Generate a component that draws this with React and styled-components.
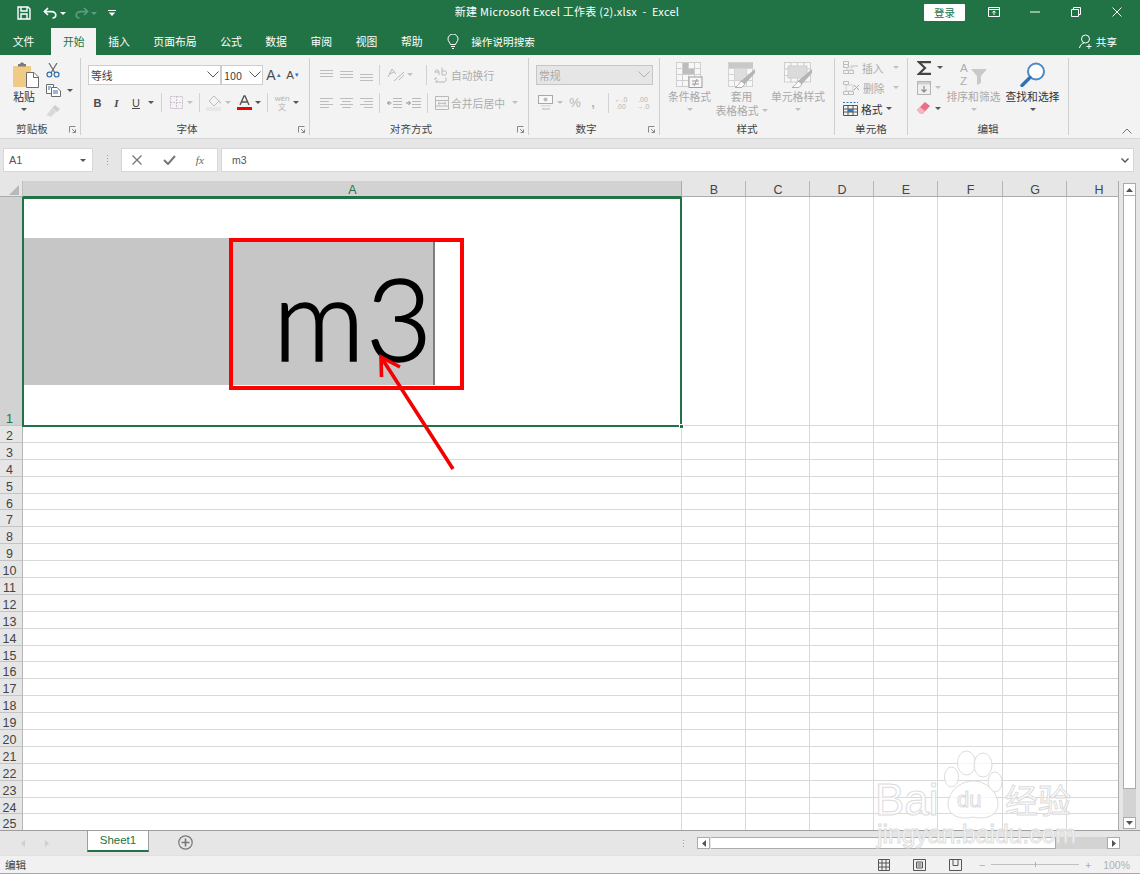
import React from 'react';
import styled, { createGlobalStyle } from 'styled-components';

const CJK = '"Noto Sans CJK SC", "Liberation Sans", sans-serif';
const GREEN = '#217346';
const DIM = '#b4b4b4';
const DARK = '#4a4a4a';

const Global = createGlobalStyle`
  html, body { margin: 0; padding: 0; background: #fff; }
  * { box-sizing: border-box; }
  body { font-family: ${CJK}; }
`;

const Page = styled.div`
  position: relative; width: 1140px; height: 875px; overflow: hidden;
  display: flex; flex-direction: column; background: #fff; font-size: 11px; color: #444;
`;

/* ---------- title bar ---------- */
const TitleBar = styled.header`
  height: 28px; background: ${GREEN}; color: #fff;
  display: grid; grid-template-columns: 1fr auto 1fr; align-items: start;
`;
const Qat = styled.div`display: flex; align-items: center; padding-left: 17px; height: 26px;`;
const QatSlot = styled.span`
  display: inline-flex; align-items: center; justify-content: center;
  width: ${p => p.$w}px; height: 20px;
`;
const DocTitle = styled.div`font-size: 11px; line-height: 22px; white-space: pre; color: #fff; padding-right: 6px; letter-spacing: .25px;`;
const WindowControls = styled.div`display: flex; align-items: center; justify-content: flex-end; padding-right: 3px; height: 24px;`;
const LoginButton = styled.button`
  width: 41px; height: 17px; padding: 0; border: 0; border-radius: 1px; margin-right: 8px;
  background: #fff; color: ${GREEN}; font: 10.5px ${CJK};
`;
const WinSlot = styled.span`
  width: 41px; display: inline-flex; justify-content: center; align-items: center; height: 20px;
`;

/* ---------- tabs ---------- */
const TabStrip = styled.nav`
  height: 27px; background: ${GREEN}; display: flex; align-items: stretch; padding-left: 1px; position: relative;
`;
const Tab = styled.span`
  padding: 0 11.8px 1px; margin-left: ${p => p.$gap || 0}px; display: flex; align-items: center;
  font-size: 10.8px; white-space: nowrap;
  background: ${p => (p.$active ? '#f3f3f3' : 'transparent')};
  color: ${p => (p.$active ? GREEN : '#fff')};
`;
const TellMe = styled.span`
  display: flex; align-items: center; gap: 12px; margin-left: 13px; color: #fff; font-size: 10.6px; padding-bottom: 1px;
`;
const Share = styled.span`
  margin-left: auto; margin-right: 23px; display: flex; align-items: center; gap: 3px; color: #fff; font-size: 10.6px;
`;

/* ---------- ribbon ---------- */
const Ribbon = styled.section`
  height: 83px; background: #f3f3f3; display: flex; padding-top: 3px; position: relative;
`;
const Group = styled.div`
  width: ${p => p.$w}px; height: 77px; display: flex; flex-direction: column;
  border-right: 1px solid #cfcfcf;
`;
const GroupBody = styled.div`flex: 1; display: flex; min-height: 0;`;
const GroupFoot = styled.div`height: 13px; display: flex; align-items: center;`;
const GroupName = styled.span`flex: 1; text-align: center; font-size: 10.6px; color: #444; line-height: 13px; white-space: nowrap;`;
const Launcher = styled.span`width: 16px; display: flex; justify-content: center; padding-top: 2px;`;
const Rows = styled.div`
  display: flex; flex-direction: column; gap: 9px; padding: 7px 0 0 ${p => p.$left || 0}px;
`;
const Row = styled.div`display: flex; align-items: center; height: 19px;`;
const Slot = styled.span`
  width: ${p => p.$w}px; height: 19px; flex: none; display: inline-flex; align-items: center; justify-content: center;
  color: ${p => (p.$dim ? DIM : DARK)}; font-size: ${p => p.$size || 11}px;
  font-weight: ${p => (p.$bold ? 700 : 400)}; font-style: ${p => (p.$italic ? 'italic' : 'normal')};
  text-decoration: ${p => (p.$under ? 'underline' : 'none')};
  font-family: ${p => (p.$serif ? '"Liberation Serif", serif' : '"Liberation Sans", sans-serif')};
`;
const StackedSlot = styled(Slot)`flex-direction: column; line-height: ${p => p.$lh || 8}px; text-align: center;`;
const Sep = styled.span`
  width: 1px; height: ${p => p.$h || 19}px; background: #d2d2d2; flex: none;
  margin: 0 ${p => p.$r ?? 5}px 0 ${p => p.$l ?? 5}px;
`;
const Caret = styled.i`
  display: inline-block; width: 0; height: 0; flex: none;
  border-left: 3px solid transparent; border-right: 3px solid transparent;
  border-top: 3px solid ${p => p.$c || (p.$dim ? '#c0c0c0' : '#555')};
  margin-left: ${p => p.$ml || 0}px;
`;
const Big = styled.div`
  width: ${p => p.$w}px; flex: none; display: flex; flex-direction: column; align-items: center;
  padding-top: 4px; margin-left: ${p => p.$ml || 0}px;
  color: ${p => (p.$dim ? '#a9a9a9' : '#333')}; font-size: 10.8px; line-height: 14px;
`;
const BigIcon = styled.div`
  height: 27px; display: flex; align-items: flex-start; justify-content: center;
  padding-left: ${p => p.$shift || 0}px;
`;
const BigLine = styled.span`white-space: nowrap; display: inline-flex; align-items: center; gap: 3px;`;
const BigCaret = styled.span`height: 12px; display: flex; align-items: center;`;
const SmallColumn = styled.div`
  display: flex; flex-direction: column; width: ${p => p.$w}px; flex: none; padding-left: ${p => p.$left}px; padding-top: ${p => p.$top}px;
`;
const SmallRow = styled.div`
  height: ${p => p.$h}px; display: flex; align-items: center; gap: ${p => p.$gap ?? 3}px; font-size: 10.8px;
  color: ${p => (p.$dim ? '#adadad' : '#333')};
`;
const FontBox = styled.div`
  width: ${p => p.$w}px; height: 20px; margin-right: ${p => p.$mr || 0}px; flex: none;
  background: #fff; border: 1px solid #cdcdcd; display: flex; align-items: center; justify-content: space-between;
  padding: 0 1px 0 2px; font-size: 10.8px; color: #444;
`;
const NumberBox = styled(FontBox)`
  background: #e6e6e6; border-color: #c6c6c6; color: #a9a9a9; padding: 0 2px 0 2px;
`;
const DimText = styled.span`color: #adadad; font-size: 10.8px; white-space: nowrap; margin-left: ${p => p.$ml}px;`;
const CollapseBtn = styled.span`position: absolute; right: 8px; bottom: 4px; display: flex;`;
const SizeUp = styled.sup`font-size: 6px; color: #2f76c0;`;
const WenChar = styled.span`font-family: ${CJK};`;

/* ---------- formula bar ---------- */
const FormulaBar = styled.div`
  height: 43px; background: #e6e6e6; border-top: 1px solid #d6d6d6;
  padding: 9px 6px 9px 3px; display: flex; align-items: stretch;
`;
const NameBox = styled.div`
  width: 90px; background: #fff; border: 1px solid #d6d6d6; display: flex; align-items: center;
  justify-content: space-between; padding: 0 6px 0 5px; font: 11px "Liberation Sans", sans-serif; color: #555;
`;
const Grip = styled.span`
  width: ${p => p.$w}px; display: flex; flex-direction: column; align-items: center; justify-content: center; gap: 2px; flex: none;
  & > b { width: 1px; height: 1px; background: #a0a0a0; display: block; }
`;
const SheetGrip = styled(Grip)`height: 12px; margin: 6px 7px 0 0;`;
const FnBox = styled.div`
  width: 97px; background: #fff; border: 1px solid #d6d6d6; display: flex; align-items: center; justify-content: space-around;
  padding-right: 3px; margin-right: 3px; color: #777;
`;
const FxMark = styled.span`font: italic 11px "Liberation Serif", serif; color: #666;`;
const FormulaInput = styled.div`
  flex: 1; background: #fff; border: 1px solid #d6d6d6; display: flex; align-items: center; justify-content: space-between;
  padding: 0 4px 0 10px; font: 10.5px "Liberation Sans", sans-serif; color: #555;
`;

/* ---------- sheet ---------- */
const SheetArea = styled.div`height: 649px; display: flex; background: #e6e6e6;`;
const SheetMain = styled.div`width: 1119px; flex: none; display: flex; flex-direction: column; overflow: hidden; border-right: 1px solid #ababab;`;
const ColHeaderRow = styled.div`height: 16px; display: flex; flex: none; border-bottom: 1px solid #ababab;`;
const Corner = styled.div`
  width: 23px; flex: none; background: #e6e6e6; border-right: 1px solid #c0c0c0; display: flex; align-items: flex-end; justify-content: flex-end; padding: 0 3px 1px 0;
`;
const ColHeader = styled.div`
  width: ${p => p.$w}px; flex: none; text-align: center; padding-left: 1px; font: 12.5px/19px "Liberation Sans", sans-serif;
  background: ${p => (p.$sel ? '#d2d2d2' : '#e6e6e6')}; color: ${p => (p.$sel ? GREEN : '#444')};
  border-right: 1px solid ${p => (p.$sel ? '#ababab' : '#b6b6b6')};
  border-bottom: ${p => (p.$sel ? `2px solid ${GREEN}` : '0')};
  height: ${p => (p.$sel ? 17 : 15)}px; overflow: hidden;
`;
const RowLine = styled.div`display: flex; flex: none; height: ${p => p.$h}px;`;
const RowHeader = styled.div`
  width: 23px; flex: none; padding: ${p => (p.$sel ? 0 : 4)}px 3px 0 0; text-align: center;
  display: flex; align-items: ${p => (p.$sel ? 'flex-end' : 'center')}; justify-content: center;
  font: 12.5px/${p => (p.$sel ? 11 : 14)}px "Liberation Sans", sans-serif; overflow: hidden;
  background: ${p => (p.$sel ? '#d2d2d2' : '#e6e6e6')}; color: ${p => (p.$sel ? GREEN : '#444')};
  border-right: 1px solid ${p => (p.$sel ? GREEN : '#b6b6b6')};
  border-bottom: 1px solid #c4c4c4;
`;
const Cell = styled.div`
  width: ${p => p.$w}px; flex: none; background: #fff;
  border-right: 1px solid #d9d9d9; border-bottom: 1px solid #d9d9d9;
`;
const SelectedCell = styled.div`
  width: 660px; flex: none; height: 230px; margin-left: -1px; background: #fff; padding-top: 39px; position: relative;
  border: 2px solid ${GREEN}; z-index: 1;
`;
const Handle = styled.i`
  position: absolute; right: -4px; bottom: -4px; width: 5px; height: 5px; background: ${GREEN}; border: 1px solid #fff;
`;
const Pasted = styled.div`
  width: 411px; height: 147px; background: #c6c6c6; border-right: 2px solid #7d7d7d;
  display: flex; align-items: center; justify-content: flex-end;
  font: 300 114px/147px Lato, "Liberation Sans", sans-serif; color: #000; overflow: hidden;
  -webkit-text-stroke: 1.6px #000;
`;
const PastedText = styled.span`display: block; margin-top: 9px; white-space: nowrap; letter-spacing: 1px;`;
const VScroll = styled.aside`flex: 1; padding: 2px 4px 1px 4px; display: flex; flex-direction: column;`;
const ScrollBtn = styled.span`
  flex: none; width: ${p => p.$w || 13}px; height: ${p => p.$h || 13}px; background: #fff; border: 1px solid #ababab;
  display: flex; align-items: center; justify-content: center;
`;
const VTrack = styled.div`flex: 1; background: #d3d3d3; display: flex; flex-direction: column;`;
const VThumb = styled.div`height: 593px; background: #fff; border: 1px solid #ababab; border-top: 0;`;

/* ---------- sheet tabs ---------- */
const SheetTabs = styled.div`
  height: 25px; background: #e6e6e6; border-top: 1px solid #9e9e9e; display: flex; align-items: flex-start;
`;
const TabNav = styled.div`width: 87px; height: 24px; flex: none; display: flex; align-items: center; padding-left: 21px; gap: 20px;`;
const SheetTab = styled.div`
  width: 62px; height: 21px; background: #fff; color: ${GREEN}; text-align: center; flex: none;
  border: 1px solid #9e9e9e; border-top: 0; border-bottom: 2px solid ${GREEN};
  font: 11.5px/18px "Liberation Sans", sans-serif;
`;
const AddSheet = styled.span`margin-left: 29px; margin-top: 4px; display: flex;`;
const Spacer = styled.span`flex: 1;`;
const HScroll = styled.div`width: 423px; height: 12px; margin: 6px 20px 0 0; display: flex; flex: none;`;
const HThumb = styled.div`width: 345px; background: #fff; border: 1px solid #ababab; border-left: 0; margin-left: 1px;`;
const HTrack = styled.div`flex: 1; background: #d3d3d3;`;

/* ---------- status bar ---------- */
const StatusBar = styled.footer`
  height: 19px; background: #f1f1f1; border-top: 1px solid #e0e0e0; border-bottom: 1px solid #a8a8a8;
  display: flex; align-items: center; padding: 0 10px 0 5px; font-size: 10.6px; color: #444;
`;
const Views = styled.div`margin-left: auto; display: flex; align-items: center; gap: 23px; margin-right: 17px;`;
const ZoomBar = styled.div`display: flex; align-items: center; gap: 5px; color: #aaa;`;
const ZoomTrack = styled.span`
  width: 88px; height: 1px; background: #c0c0c0; position: relative; margin: 0 1px;
  &::after { content: ''; position: absolute; left: 44px; top: -2px; width: 1px; height: 5px; background: #b0b0b0; }
`;
const ZoomValue = styled.span`font: 10.5px "Liberation Sans", sans-serif; color: #b0b0b0; margin-left: 7px;`;

/* ---------- overlays ---------- */
const Callout = styled.div`
  position: absolute; z-index: 2; left: 229px; top: 238px; width: 235px; height: 152px; border: 4px solid #ff0000; pointer-events: none;
`;
const OverlaySvg = styled.svg`position: absolute; z-index: 3; left: 0; top: 0; pointer-events: none;`;

/* ---------- icons ---------- */
const Ico = ({ w, h, children, fill = 'none', stroke = 'currentColor', sw = 1 }) => (
  <svg width={w} height={h} viewBox={`0 0 ${w} ${h}`} fill={fill} stroke={stroke} strokeWidth={sw}>{children}</svg>
);
const Chevron = ({ c = '#555', w = 12 }) => (
  <Ico w={w} h={7} stroke={c}><path d={`M0.5 0.5 L${w / 2} 6 L${w - 0.5} 0.5`} /></Ico>
);
const Launch = () => (
  <Ico w={7} h={7} stroke="#888"><path d="M.5 6.5V.5H6.5" /><path d="M3 3l3.5 3.5M6.5 3.5v3h-3" /></Ico>
);
const Lines = ({ w = 14, h = 12, segs, c = '#bdbdbd' }) => (
  <Ico w={w} h={h} stroke={c}>{segs.map((s, i) => <path key={i} d={`M${s[0]} ${s[2] + .5}H${s[1]}`} />)}</Ico>
);
const SaveIcon = () => (
  <Ico w={14} h={14} stroke="#fff" sw={1.4}>
    <path d="M1 1H11L13 3V13H1Z" /><path d="M4 1V5H10V1" /><path d="M4 13V8H10V13" />
  </Ico>
);
const UndoIcon = () => (
  <Ico w={14} h={12} stroke="#fff" sw={1.6}>
    <path d="M5 1L1.4 4.6L5 8" /><path d="M1.5 4.6H8.5C11 4.6 12.8 6.2 12.8 8C12.8 9.8 11.5 11 9.5 11" />
  </Ico>
);
const RedoIcon = () => (
  <Ico w={14} h={12} stroke="#5f9c7f" sw={1.6}>
    <path d="M9 1L12.6 4.6L9 8" /><path d="M12.5 4.6H5.5C3 4.6 1.2 6.2 1.2 8C1.2 9.8 2.5 11 4.5 11" />
  </Ico>
);
const QatMenu = () => (
  <Ico w={8} h={7} stroke="#fff"><path d="M0 .5H8" /><path d="M.8 2.5H7.2L4 6Z" fill="#fff" stroke="none" /></Ico>
);
const PasteIcon = () => (
  <svg width="26" height="27" viewBox="0 0 26 27">
    <rect x="0" y="4" width="18" height="21" rx="1" fill="#f0cb85" />
    <path d="M5 4.5H13V2H11C11 0 7 0 7 2H5Z" fill="#7b7b7b" />
    <path d="M13.5 10.5H21L25.5 15V25.5H13.5Z" fill="#fff" stroke="#6d6d6d" />
    <path d="M20.5 10.5V15.5H25.5" fill="none" stroke="#6d6d6d" />
  </svg>
);
const CutIcon = () => (
  <svg width="14" height="15" viewBox="0 0 14 15" fill="none">
    <path d="M3 0L9 10M11 0L5 10" stroke="#707070" strokeWidth="1.3" />
    <circle cx="3.4" cy="11.6" r="2.4" stroke="#2f6fb0" strokeWidth="1.2" />
    <circle cx="10.6" cy="11.6" r="2.4" stroke="#2f6fb0" strokeWidth="1.2" />
  </svg>
);
const CopyIcon = () => (
  <svg width="15" height="13" viewBox="0 0 15 13" fill="#fff" stroke="#6b6b6b">
    <path d="M.5.5H7.5V9.5H.5Z" /><path d="M5.5 3.5H11L14.5 7V12.5H5.5Z" />
    <path d="M2 3H5M2 5H4M7 7H12M7 9H12" stroke="#2f6fb0" fill="none" />
  </svg>
);
const BrushIcon = () => (
  <svg width="15" height="14" viewBox="0 0 15 14">
    <path d="M9 1L14 5L11 8L6 4Z" fill="#cfcfcf" />
    <path d="M6 4L10 8L5 13L0.5 11Z" fill="#d9d9d9" />
  </svg>
);
const BorderIcon = () => (
  <Ico w={13} h={13} stroke="#cdbccd"><path d="M.5.5h12v12H.5z" strokeDasharray="2 1" /><path d="M6.5 0v13M0 6.5h13" strokeDasharray="2 1" /></Ico>
);
const FillIcon = () => (
  <svg width="17" height="16" viewBox="0 0 17 16">
    <path d="M3 6L8 1L13 6L8 11Z" fill="none" stroke="#bdbdbd" />
    <path d="M13.5 5C15 7 15.5 8 14.5 9C13.5 8.5 13 7 13.5 5Z" fill="#c8c8c8" />
    <rect x="0" y="12" width="15" height="4" fill="#e8e8e8" />
  </svg>
);
const FontColor = () => (
  <svg width="15" height="15" viewBox="0 0 15 15">
    <path d="M3 10L7 1H8L12 10M4.6 7H10.4" fill="none" stroke="#555" strokeWidth="1.4" />
    <rect x="0" y="12" width="15" height="3" fill="#f00000" />
  </svg>
);
const WrapIcon = () => (
  <Ico w={14} h={16} stroke="#b8b8b8">
    <path d="M1 5.5C1 2 5 2 5 5.5V8M1 5H5M8 .5V8M8 4H11C13 4 13 8 11 8H8" />
    <path d="M12 10.5V13C12 14.5 11 15 9 15H2M4 12.5L1.5 15L4 17M3 11H1V13" />
  </Ico>
);
const MergeIcon = () => (
  <Ico w={14} h={14} stroke="#b8b8b8"><path d="M.5.5h13v13H.5zM.5 4.5h13M.5 10h13" /><path d="M3 7.3H11M3 7.3l1.5-1.3M3 7.3l1.5 1.3M11 7.3L9.5 6M11 7.3l-1.5 1.3" /></Ico>
);
const OrientIcon = () => (
  <Ico w={18} h={14} stroke="#b8b8b8">
    <path d="M1 9L5 1L9 6M2.5 6L7 4" /><path d="M7 13L17 4M12 12L17 7" />
  </Ico>
);
const IndentIcon = ({ flip }) => (
  <Ico w={15} h={12} stroke="#b8b8b8">
    <path d="M6 1.5H15M6 4.5H15M6 7.5H15M6 10.5H15" />
    <path d={flip ? 'M0 6H4M2.5 4L4.5 6L2.5 8' : 'M.5 6H4.5M2.5 4L.5 6L2.5 8'} stroke="#8a8a8a" />
  </Ico>
);
const AccountingIcon = () => (
  <svg width="15" height="15" viewBox="0 0 15 15">
    <rect x=".5" y=".5" width="14" height="8" fill="#f8f8f8" stroke="#a8a8a8" />
    <circle cx="7.5" cy="4.5" r="2" fill="#bcbcbc" />
    <rect x="3" y="10" width="10" height="1.5" fill="#ddd" /><rect x="4" y="13" width="8" height="2" fill="#d4d4d4" />
  </svg>
);
const GridBase = ({ x = 0, y = 0, cols = 4, rows = 4, s = 6, c = '#cfcfcf' }) => (
  <g stroke={c} fill="#f7f7f7">
    {Array.from({ length: cols * rows }).map((_, i) => (
      <rect key={i} x={x + .5 + (i % cols) * s} y={y + .5 + Math.floor(i / cols) * s} width={s} height={s} />
    ))}
  </g>
);
const CondIcon = () => (
  <svg width="27" height="26" viewBox="0 0 27 26">
    <GridBase cols={4} rows={4} s={6} />
    <rect x="7" y="7" width="11" height="5" fill="#bdbdbd" /><rect x="7" y="1" width="5" height="6" fill="#bdbdbd" />
    <rect x="13" y="15" width="13" height="10.5" fill="#f7f7f7" stroke="#9e9e9e" />
    <path d="M16 19H23M16 22H23M21 17L18 24" stroke="#9a9a9a" fill="none" />
  </svg>
);
const TableStyleIcon = () => (
  <svg width="28" height="26" viewBox="0 0 28 26">
    <GridBase cols={4} rows={4} s={6} c="#d3d3d3" />
    <rect x="1" y="1" width="24" height="5" fill="#c9c9c9" />
    <rect x="7" y="7" width="11" height="11" fill="#dedede" />
    <path d="M27 7V11L17 22L13 19Z" fill="#b5b5b5" />
    <path d="M13 19L17 22L14 25.5H7C10 24 11 22 13 19Z" fill="#fff" stroke="#b0b0b0" />
  </svg>
);
const CellStyleIcon = () => (
  <svg width="29" height="26" viewBox="0 0 29 26">
    <GridBase cols={4} rows={3} s={6.5} c="#cfcfcf" />
    <rect x="4" y="4" width="19" height="12" fill="#dbdbdb" stroke="#cfcfcf" />
    <path d="M28 7V11L18 22L14 19Z" fill="#b5b5b5" />
    <path d="M14 19L18 22L15 25.5H8C11 24 12 22 14 19Z" fill="#fff" stroke="#b0b0b0" />
  </svg>
);
const InsertIcon = () => (
  <Ico w={16} h={13} stroke="#bdbdbd"><path d="M.5.5h5v3h-5zM.5 3.5h5v3h-5zM.5 9.5h5v3h-5zM5.5 9.5h5v3h-5z" /><path d="M8 5h7" /><path d="M4 6h5v3H4z" stroke="#cfcfcf" /></Ico>
);
const DeleteIcon = () => (
  <Ico w={17} h={14} stroke="#bdbdbd"><path d="M.5.5h5v3h-5zM.5 10.5h5v3h-5zM5.5 10.5h5v3h-5z" /><path d="M3 4h7v6H3z" stroke="#cfcfcf" /><path d="M11 4l5 5M16 4l-5 5" stroke="#a8a8a8" /></Ico>
);
const FormatIcon = () => (
  <svg width="15" height="15" viewBox="0 0 15 15" fill="none">
    <path d="M0 1.5H15" stroke="#2f76c0" strokeDasharray="2 1.5" />
    <path d="M.5 4.5h14v10H.5zM.5 8h14M.5 11h14M5 4.5v10M10 4.5v10" stroke="#555" />
    <rect x="5" y="8" width="5" height="3" fill="#2f76c0" />
  </svg>
);
const SumIcon = () => (
  <Ico w={15} h={14} stroke="#444" sw={2.2}><path d="M14 1.2H2L8 7L2 12.8H14" /></Ico>
);
const FillDownIcon = () => (
  <svg width="14" height="14" viewBox="0 0 14 14" fill="none">
    <rect x=".5" y=".5" width="13" height="13" fill="#f0f0f0" stroke="#b5b5b5" />
    <rect x="1" y="1" width="12" height="2.5" fill="#cfcfcf" />
    <path d="M7 5V11M4.5 8.5L7 11L9.5 8.5" stroke="#8b8b8b" strokeWidth="1.2" />
  </svg>
);
const EraserIcon = () => (
  <svg width="13" height="12" viewBox="0 0 13 12">
    <path d="M8 0L13 4L6 11.5H3L0 8Z" fill="#ea6f83" />
    <path d="M0 8L3 5L8 9L6 11.5H3Z" fill="#f6b7c2" />
  </svg>
);
const SortIcon = () => (
  <svg width="27" height="24" viewBox="0 0 27 24">
    <text x="0" y="10" fontFamily="Liberation Sans" fontSize="11.5" fill="#adadad">A</text>
    <text x="0" y="23" fontFamily="Liberation Sans" fontSize="11.5" fill="#adadad">Z</text>
    <path d="M11 7H27L21 14V21L17 23V14Z" fill="#c9c9c9" />
  </svg>
);
const FindIcon = () => (
  <svg width="26" height="25" viewBox="0 0 26 25" fill="none">
    <circle cx="16" cy="9.5" r="8" stroke="#4d8ac4" strokeWidth="2" fill="#fff" />
    <path d="M10 15.5L2 23.5" stroke="#2f73b5" strokeWidth="3.4" strokeLinecap="round" />
  </svg>
);

/* ---------- data ---------- */
const COLS = [659, 64, 64, 64, 64, 65, 64, 64];
const NAMES = ['A', 'B', 'C', 'D', 'E', 'F', 'G', 'H'];
const ROWS = Array.from({ length: 24 }, (_, i) => i + 2);
const TABS = ['插入', '页面布局', '公式', '数据', '审阅', '视图', '帮助'];

const GroupFrame = ({ w, name, launcher, children }) => (
  <Group $w={w}>
    <GroupBody>{children}</GroupBody>
    <GroupFoot>
      <GroupName>{name}</GroupName>
      {launcher && <Launcher><Launch /></Launcher>}
    </GroupFoot>
  </Group>
);

export default function App() {
  return (
    <Page>
      <Global />
      <TitleBar>
        <Qat>
          <QatSlot $w={14}><SaveIcon /></QatSlot>
          <QatSlot $w={12} />
          <QatSlot $w={14}><UndoIcon /></QatSlot>
          <QatSlot $w={11}><Caret $c="#fff" /></QatSlot>
          <QatSlot $w={7} />
          <QatSlot $w={14}><RedoIcon /></QatSlot>
          <QatSlot $w={10}><Caret $c="#5f9c7f" /></QatSlot>
          <QatSlot $w={9} />
          <QatSlot $w={8}><QatMenu /></QatSlot>
        </Qat>
        <DocTitle>新建 Microsoft Excel 工作表 (2).xlsx  -  Excel</DocTitle>
        <WindowControls>
          <LoginButton>登录</LoginButton>
          <WinSlot>
            <Ico w={12} h={10} stroke="#fff"><path d="M.5.5h11v9H.5zM.5 2.5h11" /><path d="M6 8V4M4.3 5.6L6 3.9l1.7 1.7" /></Ico>
          </WinSlot>
          <WinSlot><Ico w={10} h={2} stroke="#fff"><path d="M0 1H10" /></Ico></WinSlot>
          <WinSlot><Ico w={10} h={10} stroke="#fff"><path d="M.5 2.5h7v7h-7zM2.5 2.5v-2h7v7h-2" /></Ico></WinSlot>
          <WinSlot><Ico w={10} h={10} stroke="#fff"><path d="M.5.5l9 9M9.5.5l-9 9" /></Ico></WinSlot>
        </WindowControls>
      </TitleBar>

      <TabStrip>
        <Tab>文件</Tab>
        <Tab $active $gap={5}>开始</Tab>
        {TABS.map(t => <Tab key={t}>{t}</Tab>)}
        <TellMe>
          <Ico w={12} h={15} stroke="#fff"><path d="M3.5 10.5C3 8.5 1 7.5 1 5A5 5 0 0 1 11 5C11 7.5 9 8.5 8.5 10.5ZM4 12.5H8M5 14.5H7" /></Ico>
          操作说明搜索
        </TellMe>
        <Share>
          <Ico w={14} h={15} stroke="#fff"><circle cx="6.5" cy="5" r="4" /><path d="M.5 14C1 11 3 9.5 5 9M10 10V15M7.5 12.5H12.5" /></Ico>
          共享
        </Share>
      </TabStrip>

      <Ribbon>
        <GroupFrame w={81} name="剪贴板" launcher>
          <Big $w={42} $ml={3}>
            <BigIcon $shift={3}><PasteIcon /></BigIcon>
            <BigLine>粘贴</BigLine>
            <BigCaret><Caret /></BigCaret>
          </Big>
          <SmallColumn $w={34} $left={1} $top={2}>
            <SmallRow $h={20} $gap={0}><CutIcon /></SmallRow>
            <SmallRow $h={21} $gap={6}><CopyIcon /><Caret /></SmallRow>
            <SmallRow $h={20} $gap={0}><BrushIcon /></SmallRow>
          </SmallColumn>
        </GroupFrame>

        <GroupFrame w={229} name="字体" launcher>
          <Rows $left={7}>
            <Row>
              <FontBox $w={133}>等线<Chevron /></FontBox>
              <FontBox $w={42} $mr={1}>100<Chevron /></FontBox>
              <Slot $w={20} $size={14}>A<SizeUp>▲</SizeUp></Slot>
              <Slot $w={18} $size={11.5}>A<SizeUp>▼</SizeUp></Slot>
            </Row>
            <Row>
              <Slot $w={19} $bold>B</Slot>
              <Slot $w={19} $italic $serif $bold>I</Slot>
              <Slot $w={20} $under>U</Slot>
              <Slot $w={10}><Caret /></Slot>
              <Sep />
              <Slot $w={18}><BorderIcon /></Slot>
              <Slot $w={10}><Caret $dim /></Slot>
              <Sep $l={4} />
              <Slot $w={18}><FillIcon /></Slot>
              <Slot $w={10}><Caret $dim /></Slot>
              <Slot $w={2} />
              <Slot $w={18}><FontColor /></Slot>
              <Slot $w={10}><Caret /></Slot>
              <Sep $l={4} />
              <StackedSlot $w={18} $size={8} $dim>
                <span>wén</span><WenChar>文</WenChar>
              </StackedSlot>
              <Slot $w={10}><Caret /></Slot>
            </Row>
          </Rows>
        </GroupFrame>

        <GroupFrame w={219} name="对齐方式" launcher>
          <Rows $left={7}>
            <Row>
              <Slot $w={20}><Lines segs={[[0, 13, 1], [0, 13, 4], [0, 13, 7]]} /></Slot>
              <Slot $w={20}><Lines segs={[[0, 13, 2], [0, 13, 5], [0, 13, 8]]} /></Slot>
              <Slot $w={20}><Lines segs={[[0, 13, 5], [0, 13, 8], [0, 13, 11]]} /></Slot>
              <Sep $l={2} $r={7} $h={20} />
              <Slot $w={18}><OrientIcon /></Slot>
              <Slot $w={9}><Caret $dim /></Slot>
              <Sep $l={12} $r={7} $h={20} />
              <Slot $w={14}><WrapIcon /></Slot>
              <DimText $ml={3}>自动换行</DimText>
            </Row>
            <Row>
              <Slot $w={20}><Lines h={11} segs={[[0, 13, 1], [0, 9, 4], [0, 13, 7], [0, 9, 10]]} /></Slot>
              <Slot $w={20}><Lines h={11} segs={[[0, 13, 1], [2, 11, 4], [0, 13, 7], [2, 11, 10]]} /></Slot>
              <Slot $w={20}><Lines h={11} segs={[[0, 13, 1], [4, 13, 4], [0, 13, 7], [4, 13, 10]]} /></Slot>
              <Sep $l={2} $r={6} $h={20} />
              <Slot $w={16}><IndentIcon /></Slot>
              <Slot $w={4} />
              <Slot $w={15}><IndentIcon flip /></Slot>
              <Sep $l={6} $r={6} $h={20} />
              <Slot $w={15}><MergeIcon /></Slot>
              <DimText $ml={2}>合并后居中</DimText>
              <Slot $w={20}><Caret $dim /></Slot>
            </Row>
          </Rows>
        </GroupFrame>

        <GroupFrame w={131} name="数字" launcher>
          <Rows $left={7}>
            <Row><NumberBox $w={117}>常规<Chevron c="#b0b0b0" /></NumberBox></Row>
            <Row>
              <Slot $w={1} />
              <Slot $w={17}><AccountingIcon /></Slot>
              <Slot $w={12}><Caret $dim /></Slot>
              <Slot $w={18} $size={13} $dim>%</Slot>
              <Slot $w={18} $size={13} $dim $bold>,</Slot>
              <Sep $l={6} $r={5} $h={20} />
              <StackedSlot $w={14} $size={7} $lh={7} $dim><span>←.0</span><span>.00</span></StackedSlot>
              <Slot $w={8} />
              <StackedSlot $w={14} $size={7} $lh={7} $dim><span>.00</span><span>→.0</span></StackedSlot>
            </Row>
          </Rows>
        </GroupFrame>

        <GroupFrame w={175} name="样式">
          <Big $w={51} $dim $ml={4}>
            <BigIcon><CondIcon /></BigIcon>
            <BigLine>条件格式</BigLine>
            <BigCaret><Caret $dim /></BigCaret>
          </Big>
          <Big $w={53} $dim>
            <BigIcon><TableStyleIcon /></BigIcon>
            <BigLine>套用</BigLine>
            <BigLine>表格格式<Caret $dim /></BigLine>
          </Big>
          <Big $w={60} $dim>
            <BigIcon><CellStyleIcon /></BigIcon>
            <BigLine>单元格样式</BigLine>
            <BigCaret><Caret $dim /></BigCaret>
          </Big>
        </GroupFrame>

        <GroupFrame w={73} name="单元格">
          <SmallColumn $w={72} $left={8} $top={0}>
            <SmallRow $h={19} $dim><InsertIcon />插入<Caret $dim $ml={6} /></SmallRow>
            <SmallRow $h={21} $dim><DeleteIcon />删除<Caret $dim $ml={5} /></SmallRow>
            <SmallRow $h={21}><FormatIcon />格式<Caret /></SmallRow>
          </SmallColumn>
        </GroupFrame>

        <GroupFrame w={161} name="编辑">
          <SmallColumn $w={37} $left={9} $top={0}>
            <SmallRow $h={19} $gap={5}><SumIcon /><Caret /></SmallRow>
            <SmallRow $h={21} $gap={4}><FillDownIcon /><Caret $dim /></SmallRow>
            <SmallRow $h={20} $gap={5}><EraserIcon /><Caret /></SmallRow>
          </SmallColumn>
          <Big $w={57} $dim>
            <BigIcon><SortIcon /></BigIcon>
            <BigLine>排序和筛选</BigLine>
            <BigCaret><Caret $dim /></BigCaret>
          </Big>
          <Big $w={59} $ml={1}>
            <BigIcon><FindIcon /></BigIcon>
            <BigLine>查找和选择</BigLine>
            <BigCaret><Caret /></BigCaret>
          </Big>
        </GroupFrame>
        <CollapseBtn><Ico w={10} h={6} stroke="#777"><path d="M.5 5.5L5 1L9.5 5.5" /></Ico></CollapseBtn>
      </Ribbon>

      <FormulaBar>
        <NameBox>A1<Caret /></NameBox>
        <Grip $w={28}><b /><b /><b /><b /></Grip>
        <FnBox>
          <Ico w={10} h={10} stroke="#777" sw={1.3}><path d="M.5.5l9 9M9.5.5l-9 9" /></Ico>
          <Ico w={13} h={10} stroke="#777" sw={2}><path d="M1 5l4 4L12 1" /></Ico>
          <FxMark>fx</FxMark>
        </FnBox>
        <FormulaInput>m3<Ico w={8} h={5} stroke="#555" sw={1.4}><path d="M.5.5L4 4L7.5.5" /></Ico></FormulaInput>
      </FormulaBar>

      <SheetArea>
        <SheetMain>
          <ColHeaderRow>
            <Corner>
              <Ico w={10} h={10} fill="#b8b8b8" stroke="none"><path d="M10 0V10H0Z" /></Ico>
            </Corner>
            {COLS.map((w, i) => <ColHeader key={NAMES[i]} $w={w} $sel={i === 0}>{NAMES[i]}</ColHeader>)}
          </ColHeaderRow>
          <RowLine $h={229}>
            <RowHeader $sel>1</RowHeader>
            <SelectedCell>
              <Pasted><PastedText>m3</PastedText></Pasted>
              <Handle />
            </SelectedCell>
            {COLS.slice(1).map((w, i) => <Cell key={i} $w={w} />)}
          </RowLine>
          {ROWS.map(r => (
            <RowLine key={r} $h={16.9}>
              <RowHeader>{r}</RowHeader>
              {COLS.map((w, i) => <Cell key={i} $w={w} />)}
            </RowLine>
          ))}
        </SheetMain>
        <VScroll>
          <ScrollBtn><Ico w={7} h={4} fill="#555" stroke="none"><path d="M0 4L3.5 0L7 4Z" /></Ico></ScrollBtn>
          <VTrack><VThumb /></VTrack>
          <ScrollBtn $h={12}><Ico w={7} h={4} fill="#555" stroke="none"><path d="M0 0L3.5 4L7 0Z" /></Ico></ScrollBtn>
        </VScroll>
      </SheetArea>

      <SheetTabs>
        <TabNav>
          <Ico w={4} h={7} fill="#cfcfcf" stroke="none"><path d="M4 0V7L0 3.5Z" /></Ico>
          <Ico w={4} h={7} fill="#cfcfcf" stroke="none"><path d="M0 0V7L4 3.5Z" /></Ico>
        </TabNav>
        <SheetTab>Sheet1</SheetTab>
        <AddSheet>
          <Ico w={15} h={15} stroke="#777" sw={1.2}><circle cx="7.5" cy="7.5" r="6.7" /><path d="M7.5 3.5V11.5M3.5 7.5H11.5" strokeWidth="1.6" /></Ico>
        </AddSheet>
        <Spacer />
        <SheetGrip $w={14}><b /><b /><b /></SheetGrip>
        <HScroll>
          <ScrollBtn $h={12}><Ico w={4} h={7} fill="#555" stroke="none"><path d="M4 0V7L0 3.5Z" /></Ico></ScrollBtn>
          <HThumb />
          <HTrack />
          <ScrollBtn $h={12}><Ico w={4} h={7} fill="#555" stroke="none"><path d="M0 0V7L4 3.5Z" /></Ico></ScrollBtn>
        </HScroll>
      </SheetTabs>

      <StatusBar>
        编辑
        <Views>
          <Ico w={12} h={12} stroke="#555"><path d="M.5.5h11v11H.5zM.5 4h11M.5 8h11M4 .5v11M8 .5v11" /></Ico>
          <Ico w={13} h={12} stroke="#555"><path d="M.5.5h12v11H.5zM3.5 3h6v6h-6zM4.5 5h4M4.5 7h4" /></Ico>
          <Ico w={13} h={12} stroke="#555"><path d="M.5.5h12v11H.5zM4 .5v6h5v-6" /></Ico>
        </Views>
        <ZoomBar>
          <span>−</span>
          <ZoomTrack />
          <span>+</span>
          <ZoomValue>100%</ZoomValue>
        </ZoomBar>
      </StatusBar>

      <Callout />
      <OverlaySvg width="1140" height="875" viewBox="0 0 1140 875" fill="none">
        <path d="M453 469L381 357" stroke="#f40000" strokeWidth="3.6" />
        <path d="M381.5 377L381 357L400 367" stroke="#f40000" strokeWidth="3.6" />
        <g stroke="#dcdcdc" strokeWidth="1" fill="#fff" fillOpacity=".75">
          <ellipse cx="951.5" cy="777" rx="7" ry="10" />
          <ellipse cx="966.5" cy="763" rx="9" ry="12" />
          <ellipse cx="983" cy="765" rx="9" ry="12" />
          <ellipse cx="995" cy="782" rx="7" ry="10" />
          <path d="M973 781C987 781 998 793 998 804C998 816 985 820 973 817C960 820 948 816 948 804C948 793 959 781 973 781Z" />
          <text x="875" y="815" fontFamily="Liberation Sans" fontSize="44">Bai</text>
          <text x="957" y="807" fontFamily="Liberation Sans" fontSize="22">du</text>
          <text x="1005" y="813" fontFamily="Noto Sans CJK SC" fontSize="33">经验</text>
          <text x="877" y="843" fontFamily="Liberation Sans" fontSize="25" textLength="199">jingyan.baidu.com</text>
        </g>
      </OverlaySvg>
    </Page>
  );
}
